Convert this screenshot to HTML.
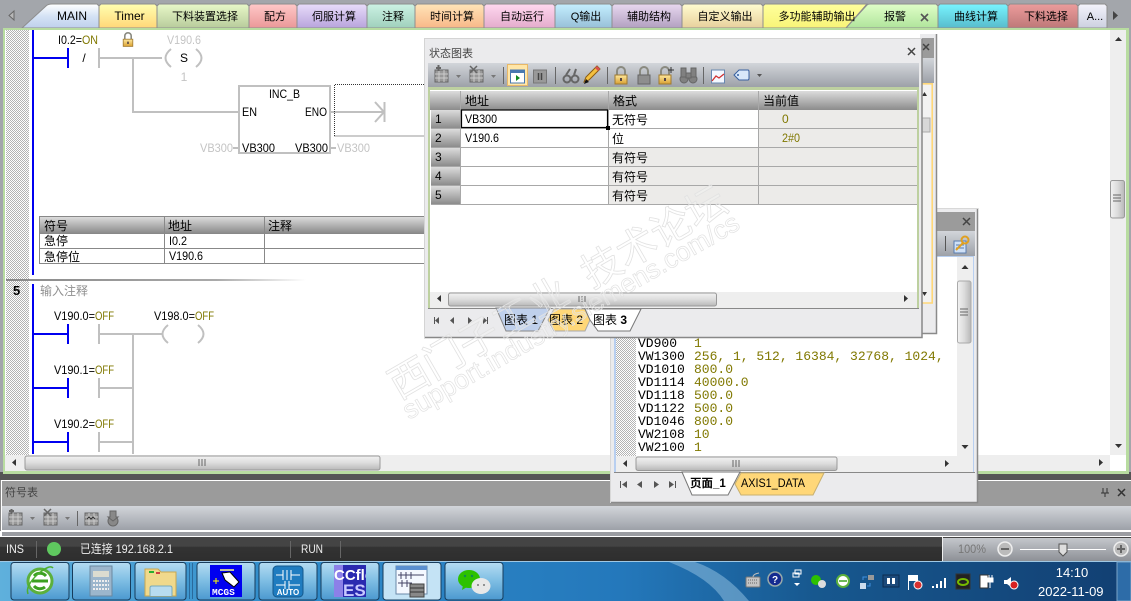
<!DOCTYPE html>
<html><head><meta charset="utf-8"><style>
html,body{margin:0;padding:0;background:#555;overflow:hidden}
svg{display:block}
text{font-family:"Liberation Sans","Noto Sans CJK SC",sans-serif;font-size:12px;fill:#000;white-space:pre}
.s{font-size:11px}.g{fill:#c4c4c4}.o{fill:#807800}.m{font-family:"Liberation Mono","Noto Sans CJK SC",monospace;font-size:13px}
.t{text-anchor:middle}.l{stroke:#c0c0c0;stroke-width:2;fill:none}.b{stroke:#0000f0;stroke-width:2;fill:none}
.gl{stroke:#a8a8a8;stroke-width:1;fill:none}
</style></head><body>
<svg xmlns="http://www.w3.org/2000/svg" width="1131" height="601" viewBox="0 0 1131 601">
<defs>
<pattern id="dit" width="2" height="2" patternUnits="userSpaceOnUse"><rect width="2" height="2" fill="#fff"/><rect width="1" height="1" fill="#b4b4b4"/><rect x="1" y="1" width="1" height="1" fill="#b4b4b4"/></pattern>
<linearGradient id="hd" x1="0" y1="0" x2="0" y2="1"><stop offset="0" stop-color="#dcdcdc"/><stop offset="1" stop-color="#8c8c8c"/></linearGradient>
<linearGradient id="tb" x1="0" y1="0" x2="0" y2="1"><stop offset="0" stop-color="#d2d5da"/><stop offset="1" stop-color="#9da1a8"/></linearGradient>
<linearGradient id="sbh" x1="0" y1="0" x2="0" y2="1"><stop offset="0" stop-color="#f2f2f2"/><stop offset=".5" stop-color="#dcdcdc"/><stop offset="1" stop-color="#b8b8b8"/></linearGradient>
<linearGradient id="sbv" x1="0" y1="0" x2="1" y2="0"><stop offset="0" stop-color="#f2f2f2"/><stop offset=".5" stop-color="#dcdcdc"/><stop offset="1" stop-color="#b8b8b8"/></linearGradient>
<linearGradient id="tk" x1="0" y1="0" x2="1" y2="0"><stop offset="0" stop-color="#5fb0dc"/><stop offset=".25" stop-color="#2f8ccb"/><stop offset=".55" stop-color="#2478bb"/><stop offset=".72" stop-color="#17588f"/><stop offset="1" stop-color="#123f72"/></linearGradient>
<linearGradient id="btn" x1="0" y1="0" x2="0" y2="1"><stop offset="0" stop-color="#b5dcf2"/><stop offset=".5" stop-color="#7dbde3"/><stop offset="1" stop-color="#4b98cf"/></linearGradient>
<linearGradient id="st" x1="0" y1="0" x2="0" y2="1"><stop offset="0" stop-color="#444"/><stop offset=".4" stop-color="#444"/><stop offset=".41" stop-color="#333"/><stop offset="1" stop-color="#2e2e2e"/></linearGradient>
<linearGradient id="zm" x1="0" y1="0" x2="0" y2="1"><stop offset="0" stop-color="#c4c7cc"/><stop offset="1" stop-color="#8d9096"/></linearGradient>
<linearGradient id="dv" x1="0" y1="0" x2="1" y2="0"><stop offset="0" stop-color="#888"/><stop offset=".7" stop-color="#aaa"/><stop offset="1" stop-color="#fff"/></linearGradient>
<linearGradient id="t0" x1="0" y1="0" x2="0" y2="1"><stop offset="0" stop-color="#fff"/><stop offset=".5" stop-color="#d5e3f5"/><stop offset="1" stop-color="#bfd0ec"/></linearGradient>
<linearGradient id="t1" x1="0" y1="0" x2="0" y2="1"><stop offset="0" stop-color="#ffffb0"/><stop offset="1" stop-color="#ffd778"/></linearGradient>
<linearGradient id="t2" x1="0" y1="0" x2="0" y2="1"><stop offset="0" stop-color="#e8f8c8"/><stop offset="1" stop-color="#b8cc9c"/></linearGradient>
<linearGradient id="t3" x1="0" y1="0" x2="0" y2="1"><stop offset="0" stop-color="#ffc8c8"/><stop offset="1" stop-color="#ea9898"/></linearGradient>
<linearGradient id="t4" x1="0" y1="0" x2="0" y2="1"><stop offset="0" stop-color="#e8dcfa"/><stop offset="1" stop-color="#b8a4dc"/></linearGradient>
<linearGradient id="t5" x1="0" y1="0" x2="0" y2="1"><stop offset="0" stop-color="#ccf2e4"/><stop offset="1" stop-color="#a0d0bc"/></linearGradient>
<linearGradient id="t6" x1="0" y1="0" x2="0" y2="1"><stop offset="0" stop-color="#ffe4b8"/><stop offset="1" stop-color="#f8b888"/></linearGradient>
<linearGradient id="t7" x1="0" y1="0" x2="0" y2="1"><stop offset="0" stop-color="#ffd8f0"/><stop offset="1" stop-color="#e4accc"/></linearGradient>
<linearGradient id="t8" x1="0" y1="0" x2="0" y2="1"><stop offset="0" stop-color="#c4eeff"/><stop offset="1" stop-color="#98c0d8"/></linearGradient>
<linearGradient id="t9" x1="0" y1="0" x2="0" y2="1"><stop offset="0" stop-color="#e8d8f0"/><stop offset="1" stop-color="#b2a0c0"/></linearGradient>
<linearGradient id="t10" x1="0" y1="0" x2="0" y2="1"><stop offset="0" stop-color="#fffcd0"/><stop offset="1" stop-color="#e8d09c"/></linearGradient>
<linearGradient id="t11" x1="0" y1="0" x2="0" y2="1"><stop offset="0" stop-color="#ffff9c"/><stop offset="1" stop-color="#f8f478"/></linearGradient>
<linearGradient id="t12" x1="0" y1="0" x2="0" y2="1"><stop offset="0" stop-color="#e0ffc8"/><stop offset="1" stop-color="#b0e49c"/></linearGradient>
<linearGradient id="t13" x1="0" y1="0" x2="0" y2="1"><stop offset="0" stop-color="#78f4ff"/><stop offset="1" stop-color="#58bccc"/></linearGradient>
<linearGradient id="t14" x1="0" y1="0" x2="0" y2="1"><stop offset="0" stop-color="#ec9c9c"/><stop offset="1" stop-color="#be7878"/></linearGradient>
<linearGradient id="t15" x1="0" y1="0" x2="0" y2="1"><stop offset="0" stop-color="#f4f4fc"/><stop offset="1" stop-color="#ccd0e0"/></linearGradient>
<linearGradient id="lock" x1="0" y1="0" x2="0" y2="1"><stop offset="0" stop-color="#ffe9a0"/><stop offset="1" stop-color="#d9a030"/></linearGradient>
<g id="lk"><path d="M-4-1v-4a4 4 0 0 1 8 0v4" fill="none" stroke="#8a8a80" stroke-width="2"/><rect x="-6" y="-1" width="12" height="9" fill="url(#lock)" stroke="#a07a30"/><rect x="-1" y="2" width="2" height="3" fill="#544"/></g>
<g id="grd"><rect x="0" y="3" width="13" height="12" fill="#999" stroke="#666"/><path d="M0 7h13M0 11h13M4 3v12M9 3v12" stroke="#ccc" fill="none"/></g>
</defs>

<!-- base -->
<rect width="1131" height="601" fill="#a3a6ab"/>
<rect x="0" y="472" width="1131" height="8" fill="#555"/>

<!-- tabs -->
<g stroke="#8e8e8e">
<path d="M22 28 L46 6 Q48 4 52 4 H97 L99 6 V28Z" fill="url(#t0)"/>
<path d="M99 28 V6 L101 4 H155 L157 6 V28Z" fill="url(#t1)"/>
<path d="M157 28 V6 L159 4 H247 L249 6 V28Z" fill="url(#t2)"/>
<path d="M249 28 V6 L251 4 H295 L297 6 V28Z" fill="url(#t3)"/>
<path d="M297 28 V6 L299 4 H365 L367 6 V28Z" fill="url(#t4)"/>
<path d="M367 28 V6 L369 4 H413 L415 6 V28Z" fill="url(#t5)"/>
<path d="M415 28 V6 L417 4 H482 L484 6 V28Z" fill="url(#t6)"/>
<path d="M484 28 V6 L486 4 H553 L555 6 V28Z" fill="url(#t7)"/>
<path d="M555 28 V6 L557 4 H610 L612 6 V28Z" fill="url(#t8)"/>
<path d="M612 28 V6 L614 4 H680 L682 6 V28Z" fill="url(#t9)"/>
<path d="M682 28 V6 L684 4 H761 L763 6 V28Z" fill="url(#t10)"/>
<path d="M763 28 V6 L765 4 H867 L846 28Z" fill="url(#t11)"/>
<path d="M846 28 L867 5 Q868 4 870 4 H936 L938 6 V28Z" fill="url(#t12)"/>
<path d="M938 28 V6 L940 4 H1006 L1008 6 V28Z" fill="url(#t13)"/>
<path d="M1008 28 V6 L1010 4 H1076 L1078 6 V28Z" fill="url(#t14)"/>
<path d="M1078 28 V6 L1080 4 H1105 L1107 6 V28Z" fill="url(#t15)"/>
</g>
<path d="M14 11 L9 15.500 L14 20Z" fill="#b8b8b8" stroke="#666"/>
<path d="M1113 11 L1118 15.500 L1113 20Z" fill="#444"/>
<g>
<text x="72" y="20" class="t">MAIN</text>
<text x="129.500" y="20" class="t">Timer</text>
<text x="205" y="20" class="t s">下料装置选择</text>
<text x="275" y="20" class="t s">配方</text>
<text x="334" y="20" class="t s">伺服计算</text>
<text x="393" y="20" class="t s">注释</text>
<text x="452" y="20" class="t s">时间计算</text>
<text x="522" y="20" class="t s">自动运行</text>
<text x="586" y="20" class="t s">Q输出</text>
<text x="649" y="20" class="t s">辅助结构</text>
<text x="725" y="20" class="t s">自定义输出</text>
<text x="817" y="20" class="t s">多功能辅助输出</text>
<text x="895" y="20" class="t s">报警</text>
<text x="976" y="20" class="t s">曲线计算</text>
<text x="1046" y="20" class="t s">下料选择</text>
<text x="1095" y="20" class="t s">A...</text>
</g>
<path d="M921 14l7 7M928 14l-7 7" stroke="#555" stroke-width="1.600"/>

<!-- main panel -->
<rect x="3" y="28" width="1126" height="446" fill="#b8dca0"/>
<rect x="5" y="30" width="1121" height="441" fill="#fff"/>
<rect x="6" y="30" width="23" height="425" fill="#d9d9d9"/>
<rect x="6" y="30" width="23" height="425" fill="url(#dit)"/>
<rect x="1110" y="30" width="16" height="425" fill="#eeeeee"/>
<path d="M1115 41h7l-3.500-4z" fill="#333"/>
<path d="M1115 444h7l-3.500 4z" fill="#333"/>
<rect x="1110.500" y="180.500" width="14" height="37.500" rx="2" fill="url(#sbv)" stroke="#999"/>
<path d="M1113 195h8M1113 198h8M1113 201h8" stroke="#666"/>
<rect x="5" y="455" width="1105" height="16" fill="#eee"/>
<path d="M16 459v7l-4-3.500z" fill="#333"/>
<path d="M1099 459v7l4-3.500z" fill="#333"/>
<rect x="25" y="456" width="355" height="14" rx="2" fill="url(#sbh)" stroke="#999"/>
<path d="M199 459v7M202 459v7M205 459v7" stroke="#666"/>

<!-- ladder net 4 -->
<path class="b" d="M33 30V275"/>
<path class="b" d="M33 58H68M68 48V68"/>
<text x="58" y="44" textLength="24" lengthAdjust="spacingAndGlyphs">I0.2=</text><text x="82" y="44" class="o" textLength="16" lengthAdjust="spacingAndGlyphs">ON</text>
<use href="#lk" transform="translate(128,40) scale(.8)"/>
<text x="167" y="44" class="g" textLength="34" lengthAdjust="spacingAndGlyphs">V190.6</text>
<path class="l" d="M99 48V68M99 58H162M133 58V112H238"/>
<text x="84" y="62" class="t">/</text>
<path class="l" d="M171 49Q160 58 171 67M196 49Q207 58 196 67"/>
<text x="184" y="62" class="t">S</text>
<text x="184" y="81" class="t g">1</text>
<rect x="239" y="86" width="91" height="67" fill="#fff" stroke="#c0c0c0" stroke-width="2"/>
<text x="269" y="98" textLength="31" lengthAdjust="spacingAndGlyphs">INC_B</text>
<text x="242" y="116" textLength="15" lengthAdjust="spacingAndGlyphs">EN</text><text x="305" y="116" textLength="22" lengthAdjust="spacingAndGlyphs">ENO</text>
<text x="242" y="152" textLength="33" lengthAdjust="spacingAndGlyphs">VB300</text><text x="295" y="152" textLength="33" lengthAdjust="spacingAndGlyphs">VB300</text>
<text x="200" y="152" class="g" textLength="33" lengthAdjust="spacingAndGlyphs">VB300</text><text x="337" y="152" class="g" textLength="33" lengthAdjust="spacingAndGlyphs">VB300</text>
<path class="l" d="M233 148H238M331 148H336M331 112H384M375 102L384 112L375 122M384.500 102V122"/>
<path d="M334.500 136V84.500H424M334.500 136H424" stroke="#333" stroke-dasharray="1 1" fill="none"/>

<!-- symbol table -->
<rect x="39.500" y="216.500" width="386" height="47" fill="#fff" stroke="#888"/>
<rect x="40" y="217" width="386" height="16" fill="url(#hd)"/>
<path d="M39 233.500H426M39 248.500H426M164.500 217V263M264.500 217V263" stroke="#888"/>
<text x="44" y="230">符号</text><text x="168" y="230">地址</text><text x="268" y="230">注释</text>
<text x="44" y="245">急停</text><text x="169" y="245" textLength="18" lengthAdjust="spacingAndGlyphs">I0.2</text>
<text x="44" y="261">急停位</text><text x="169" y="260" textLength="34" lengthAdjust="spacingAndGlyphs">V190.6</text>

<!-- divider -->
<rect x="6" y="279" width="300" height="2" fill="url(#dv)"/>

<!-- net 5 -->
<text x="13" y="295" style="font-weight:bold;font-size:13px">5</text>
<path class="b" d="M33 284V454"/>
<text x="40" y="295" style="fill:#909090">输入注释</text>
<text x="54" y="320" textLength="41" lengthAdjust="spacingAndGlyphs">V190.0=</text><text x="95" y="320" class="o" textLength="19" lengthAdjust="spacingAndGlyphs">OFF</text>
<text x="154" y="320" textLength="41" lengthAdjust="spacingAndGlyphs">V198.0=</text><text x="195" y="320" class="o" textLength="19" lengthAdjust="spacingAndGlyphs">OFF</text>
<path class="b" d="M33 334H68M68 324V344"/>
<path class="l" d="M99 324V344M99 334H162M133 334V454"/>
<path class="l" d="M168 325Q157 334 168 343M198 325Q209 334 198 343"/>
<text x="54" y="374" textLength="41" lengthAdjust="spacingAndGlyphs">V190.1=</text><text x="95" y="374" class="o" textLength="19" lengthAdjust="spacingAndGlyphs">OFF</text>
<path class="b" d="M33 388H68M68 378V398"/>
<path class="l" d="M99 378V398M99 388H133"/>
<text x="54" y="428" textLength="41" lengthAdjust="spacingAndGlyphs">V190.2=</text><text x="95" y="428" class="o" textLength="19" lengthAdjust="spacingAndGlyphs">OFF</text>
<path class="b" d="M33 442H68M68 432V452"/>
<path class="l" d="M99 432V452M99 442H133"/>

<!-- symbol panel -->
<rect x="0" y="480" width="1131" height="57" fill="#fff"/>
<rect x="2" y="481" width="1129" height="25" fill="#9b9b9b"/>
<rect x="2" y="506" width="1129" height="24" fill="url(#tb)"/>
<rect x="2" y="532" width="1129" height="4" fill="#9b9da2"/>
<path d="M0.500 531V480" stroke="#888"/>
<text x="5" y="496" class="s" style="fill:#444">符号表</text>
<path d="M1103 488v5M1107 488v5M1101 493h8M1105 493v4" stroke="#333" fill="none"/>
<path d="M1118 489l7 7M1125 489l-7 7" stroke="#333" stroke-width="1.500"/>
<use href="#grd" x="9" y="510"/><path d="M9 511h5M11.500 509v5" stroke="#666" stroke-width="2"/>
<path d="M30 517h5l-2.500 3z" fill="#777"/>
<use href="#grd" x="44" y="510"/><path d="M44 509l7 7M51 509l-7 7" stroke="#666" stroke-width="1.500"/>
<path d="M65 517h5l-2.500 3z" fill="#777"/>
<path d="M77.500 511v15" stroke="#666"/>
<use href="#grd" x="85" y="510"/><path d="M87 519l2-2 2 2 2-2 2 2" stroke="#333" fill="none"/>
<circle cx="113" cy="521" r="5" fill="#888" stroke="#666"/><path d="M110 511h6v6h2l-5 4-5-4h2z" fill="#888" stroke="#666"/>

<!-- status bar -->
<rect x="0" y="537" width="1131" height="24" fill="url(#st)"/>
<path d="M36.500 541v17M290.500 541v17M340.500 541v17" stroke="#666"/>
<text x="6" y="553" style="fill:#eee" textLength="18" lengthAdjust="spacingAndGlyphs">INS</text>
<circle cx="54" cy="549" r="7" fill="#5fc85f"/>
<text x="80" y="553" style="fill:#eee" textLength="93" lengthAdjust="spacingAndGlyphs">已连接 192.168.2.1</text>
<text x="301" y="553" style="fill:#eee" textLength="22" lengthAdjust="spacingAndGlyphs">RUN</text>
<rect x="943" y="538" width="188" height="23" fill="url(#zm)"/>
<path d="M942.500 537v24" stroke="#eee"/>
<text x="958" y="553" style="fill:#777" textLength="28" lengthAdjust="spacingAndGlyphs">100%</text>
<circle cx="1005" cy="549" r="7" fill="#bbb" stroke="#eee" stroke-width="1.500"/><path d="M1001 549h8" stroke="#666" stroke-width="2"/>
<path d="M1020 549.500h86" stroke="#fff"/>
<path d="M1059 544h8v8l-4 4-4-4z" fill="#ddd" stroke="#555"/>
<circle cx="1121" cy="549" r="7" fill="#bbb" stroke="#eee" stroke-width="1.500"/><path d="M1117 549h8M1121 545v8" stroke="#666" stroke-width="2"/>

<!-- taskbar -->
<rect x="0" y="561" width="1131" height="40" fill="url(#tk)"/>
<rect x="0" y="561" width="1131" height="1" fill="#9fc8e4"/>
<path d="M669 562Q710 578 724 601H749Q725 572 695 562Z" fill="#8ebedf" opacity=".55"/>
<g stroke="#173c5c" fill="url(#btn)">
<rect x="11" y="562.500" width="58" height="37.500" rx="3"/>
<rect x="72.500" y="562.500" width="58" height="37.500" rx="3"/>
<rect x="135" y="562.500" width="51" height="37.500" rx="3"/>
<rect x="197" y="562.500" width="58" height="37.500" rx="3"/>
<rect x="259" y="562.500" width="58" height="37.500" rx="3"/>
<rect x="321" y="562.500" width="58" height="37.500" rx="3"/>
<rect x="383" y="562.500" width="58" height="37.500" rx="3" fill="#c4e3f5"/>
<rect x="445" y="562.500" width="58" height="37.500" rx="3"/>
</g>
<path d="M189.500 563v36M192.500 563v36" stroke="#2a6a9c"/>
<!-- IE -->
<circle cx="40" cy="581" r="12" fill="#fff" stroke="#5cb03c" stroke-width="3"/><path d="M32 581h16M34 576a8 8 0 0 1 12 0M34 586a8 8 0 0 0 11 1" stroke="#3ca020" stroke-width="3" fill="none"/><path d="M28 594Q25 586 38 574Q50 564 53 568" stroke="#4caf30" fill="none" stroke-width="1.500"/>
<!-- calc -->
<rect x="90" y="566" width="22" height="30" fill="#9cb6cc" stroke="#6a88a0"/><rect x="93" y="571" width="16" height="6" fill="#dcdcd0"/><path d="M93 581h16M93 585h16M93 589h16" stroke="#eee" stroke-width="2" stroke-dasharray="2 1"/>
<!-- folder -->
<path d="M145 569h13l3 3h15v24h-31z" fill="#f0d98c" stroke="#c8a850"/><rect x="149" y="571" width="5" height="2" fill="#28b030"/><rect x="156" y="572" width="4" height="2" fill="#d04040"/><path d="M150 596v-8q0-2 2-2h18q2 0 2 2v8" fill="#b8dcf0" stroke="#7ab"/>
<!-- MCGS -->
<rect x="210" y="565" width="32" height="32" fill="#0000f0"/><path d="M222 573l8-1 9 10-5 5-9-7z" fill="#fff" stroke="#000"/><path d="M220 570h14" stroke="#ff8" stroke-width="1.500"/><path d="M213 581h6M216 578v6" stroke="#ff0"/>
<text x="212" y="595" style="font-family:'Liberation Mono',monospace;font-size:9.500px;fill:#fff;font-weight:bold">MCGS</text>
<!-- AUTO -->
<rect x="273" y="566" width="30" height="31" rx="4" fill="#1f7cc0" stroke="#14588c"/><path d="M276 575h7M283 570v10M291 570v10M287 570v10M291 575h9M276 585h9M285 581v8M289 581v8M289 585h11" stroke="#fff" fill="none"/>
<text x="288" y="595" class="t" style="font-size:8px;fill:#fff;font-weight:bold">AUTO</text>
<!-- CCfle -->
<svg x="334" y="565" width="32" height="32" viewBox="0 0 32 32"><rect width="32" height="32" fill="#2a2ab0"/><rect width="9" height="32" fill="#8c80e8"/><text x="0" y="15" style="font-size:15px;fill:#fff;font-weight:bold">CCfle</text><text x="9" y="31" style="font-size:17px;fill:#c8c8ff;font-weight:bold">ES</text></svg>
<!-- LAD -->
<rect x="396" y="566" width="31" height="28" fill="#f4f8ff" stroke="#6a88a8"/><rect x="396" y="566" width="31" height="4" fill="#5a90d0"/><path d="M398 575h26M398 583h14M401 572v7M406 572v7M411 572v7M402 580v7M407 580v7" stroke="#446" fill="none"/><rect x="410" y="584" width="14" height="13" fill="#888" stroke="#444"/><path d="M410 588h14M410 592h14" stroke="#333"/>
<!-- WeChat -->
<ellipse cx="469" cy="579" rx="11" ry="9" fill="#2dc100"/><path d="M463 585l-1 5 5-3z" fill="#2dc100"/><ellipse cx="481" cy="586" rx="9.500" ry="8" fill="#e8e8e8"/><circle cx="465" cy="576" r="1.200" fill="#185"/><circle cx="472" cy="576" r="1.200" fill="#185"/><circle cx="478" cy="585" r="1" fill="#777"/><circle cx="484" cy="585" r="1" fill="#777"/>

<!-- tray -->
<rect x="746" y="577" width="14" height="10" rx="1" fill="#c4c4c4" stroke="#777"/><path d="M748 580h10M748 583h10" stroke="#666" stroke-dasharray="1 1"/><path d="M753 577q0-3 6-4" stroke="#bbb" fill="none"/>
<circle cx="775" cy="579" r="7" fill="#142a90" stroke="#9aa" stroke-width="1.500"/><text x="775" y="583" class="t" style="fill:#fff;font-weight:bold;font-size:10px">?</text>
<rect x="795" y="570" width="6" height="4" fill="none" stroke="#fff"/><rect x="793" y="573" width="6" height="4" fill="none" stroke="#fff"/><path d="M794 583h6l-3 3z" fill="#fff"/>
<circle cx="816" cy="580" r="5" fill="#2dc100"/><circle cx="822" cy="584" r="4" fill="#ddd"/>
<circle cx="843" cy="581" r="6" fill="#fff" stroke="#5cb03c" stroke-width="2"/><path d="M839 581h8" stroke="#3ca020" stroke-width="1.500"/>
<rect x="860" y="583" width="6" height="6" fill="#cde"/><rect x="868" y="575" width="6" height="5" fill="#999"/><path d="M863 580v-3h4M870 583v3h-3" stroke="#4090e0" fill="none"/>
<rect x="883" y="575" width="16" height="12" fill="#1c4a7a" stroke="#0c2c50"/><path d="M887 578h3v6h-3zM892 578h3v6h-3z" fill="#fff"/>
<path d="M908.500 575v15" stroke="#fff"/><path d="M909 575h9v6h-9z" fill="#fff"/><circle cx="918" cy="585" r="4" fill="#d83030" stroke="#fff"/>
<path d="M932 588h2v-2h-2zM936 588h2v-4h-2zM940 588h2v-7h-2zM944 588h2v-10h-2z" fill="#fff"/>
<rect x="956" y="574" width="14" height="15" fill="#222" stroke="#333"/><ellipse cx="963" cy="582" rx="5" ry="3" fill="none" stroke="#76b900" stroke-width="2"/>
<rect x="980" y="575" width="8" height="13" fill="#fff" stroke="#333"/><path d="M988 578h5v4h-5zM989 575v3M992 575v3M990 582v6" fill="#fff" stroke="#fff"/>
<path d="M1004 580h3l4-3v10l-4-3h-3z" fill="#fff"/><circle cx="1014" cy="585" r="4" fill="#d82020" stroke="#fff"/>
<text x="1072" y="577" class="t" style="fill:#fff;font-size:13px">14:10</text>
<text x="1038" y="596" style="fill:#fff;font-size:13px">2022-11-09</text>
<rect x="1117" y="562" width="14" height="39" fill="#2d6ca8" stroke="#7aa4c8"/>

<!-- window 3 -->
<rect x="610" y="208" width="368" height="295" fill="#ebebed"/>
<path d="M977.500 208V502.500H610" stroke="#8a8a8a" fill="none" stroke-width="1.500"/>
<path d="M610.500 503V208.500H978" stroke="#d8d8d8" fill="none"/>
<rect x="614" y="212" width="361" height="19" fill="#9b9b9b"/>
<path d="M963 218l7 7M970 218l-7 7" stroke="#444" stroke-width="1.500"/>
<rect x="614" y="231" width="361" height="25" fill="url(#tb)"/>
<rect x="614" y="256" width="360" height="216" fill="#b8cff0"/>
<rect x="616" y="257" width="357" height="215" fill="#fff"/>
<rect x="616" y="257" width="20" height="199" fill="#d9d9d9"/>
<rect x="616" y="257" width="20" height="199" fill="url(#dit)"/>
<path d="M945.500 236v15" stroke="#555"/>
<g transform="translate(954,235)"><rect x="0" y="6" width="12" height="12" fill="#cfe0f6" stroke="#5a7cae"/><path d="M2 10h8M2 13h8" stroke="#5a7cae"/><circle cx="11" cy="5" r="3.500" fill="none" stroke="#e0a020" stroke-width="2"/><path d="M9 8l-7 7" stroke="#e0a020" stroke-width="2"/></g>
<rect x="957" y="257" width="16" height="199" fill="#eee"/>
<path d="M961.500 269h7l-3.500-4z" fill="#333"/>
<path d="M961.500 445h7l-3.500 4z" fill="#333"/>
<rect x="957.500" y="281" width="13.500" height="62" rx="2" fill="url(#sbv)" stroke="#aaa"/>
<path d="M960 309h8M960 312h8M960 315h8" stroke="#666"/>
<g>
<text x="638" y="347" class="m">VD900</text><text x="694" y="347" class="m o">1</text>
<text x="638" y="360" class="m">VW1300</text><text x="694" y="360" class="m o">256, 1, 512, 16384, 32768, 1024,</text>
<text x="638" y="373" class="m">VD1010</text><text x="694" y="373" class="m o">800.0</text>
<text x="638" y="386" class="m">VD1114</text><text x="694" y="386" class="m o">40000.0</text>
<text x="638" y="399" class="m">VD1118</text><text x="694" y="399" class="m o">500.0</text>
<text x="638" y="412" class="m">VD1122</text><text x="694" y="412" class="m o">500.0</text>
<text x="638" y="425" class="m">VD1046</text><text x="694" y="425" class="m o">800.0</text>
<text x="638" y="438" class="m">VW2108</text><text x="694" y="438" class="m o">10</text>
<text x="638" y="451" class="m">VW2100</text><text x="694" y="451" class="m o">1</text>
</g>
<rect x="616" y="456" width="357" height="16" fill="#eee"/>
<path d="M627 460v7l-4-3.500z" fill="#333"/>
<path d="M945 460v7l4-3.500z" fill="#333"/>
<rect x="636" y="457" width="201" height="13.500" rx="2" fill="url(#sbh)" stroke="#999"/>
<path d="M733 460v7M736 460v7M739 460v7" stroke="#666"/>
<rect x="614" y="472" width="361" height="1" fill="#888"/>
<g fill="#555"><path d="M627 481l-5 3.500l5 3.500z"/><path d="M642 481l-5 3.500l5 3.500z"/><path d="M654 481l5 3.500l-5 3.500z"/><path d="M669 481l5 3.500l-5 3.500z"/></g>
<path d="M620.500 481v7M675.500 481v7" stroke="#555"/>
<path d="M682 472L692 495H728L740 472Z" fill="#fff" stroke="#777"/>
<path d="M735 484L741 473H824L813 495H741Z" fill="#ffd778" stroke="#c8b070"/>
<text x="690" y="487" style="font-weight:bold;font-size:11.500px">页面_1</text>
<text x="741" y="487" textLength="64" lengthAdjust="spacingAndGlyphs">AXIS1_DATA</text>

<!-- window 2 -->
<rect x="920" y="34" width="17" height="300" fill="#ebebed"/>
<path d="M936.500 34V333.500H920" stroke="#8a8a8a" fill="none" stroke-width="1.500"/>
<rect x="920" y="38" width="14" height="20" fill="#9b9b9b"/>
<path d="M923 44l6 6M929 44l-6 6" stroke="#444" stroke-width="1.500"/>
<rect x="920" y="58" width="14" height="25" fill="url(#tb)"/>
<rect x="920" y="83" width="13" height="220" fill="#f2f2f2"/>
<path d="M920 83.800H932.200V303H920" stroke="#ffd778" stroke-width="1.600" fill="none"/>
<path d="M922 96h5l-2.500-4z" fill="#333"/>
<path d="M922 292h5l-2.500 4z" fill="#333"/>
<rect x="922" y="118" width="8" height="14" fill="#d8d8d8" stroke="#aaa"/>

<!-- window 1 -->
<rect x="424" y="38" width="498" height="300" fill="#ebebed"/>
<path d="M922 39V337.500H424" stroke="#888" fill="none" stroke-width="1.500"/>
<path d="M424.500 338V38.500H922" stroke="#d4d4d4" fill="none"/>
<text x="429" y="57" class="s" style="fill:#444">状态图表</text>
<path d="M908 48l7 7M915 48l-7 7" stroke="#444" stroke-width="1.500"/>
<rect x="428" y="63" width="491" height="24" fill="url(#tb)"/>
<use href="#grd" x="435" y="67"/><path d="M436 68h5M438.500 65v6" stroke="#666" stroke-width="2"/>
<path d="M456 75h5l-2.500 3z" fill="#777"/>
<use href="#grd" x="470" y="67"/><path d="M470 66l7 7M477 66l-7 7" stroke="#666" stroke-width="1.500"/>
<path d="M491 75h5l-2.500 3z" fill="#777"/>
<path d="M503.500 67v17" stroke="#666"/>
<rect x="507.500" y="64.500" width="20" height="21" fill="#ffe6a8" stroke="#e8b868"/>
<rect x="510.500" y="70" width="14" height="13" fill="#fff" stroke="#4878b0"/><rect x="510.500" y="70" width="14" height="3" fill="#4878b0"/><path d="M516 75l4 3l-4 3z" fill="#108820"/>
<rect x="533.500" y="70" width="13" height="13" fill="#999" stroke="#777"/><path d="M538.500 73v7M541.500 73v7" stroke="#444" stroke-width="1.500"/>
<path d="M555.500 67v17" stroke="#666"/>
<g fill="none" stroke="#666" stroke-width="2"><circle cx="567" cy="79" r="3.500"/><circle cx="575" cy="79" r="3.500"/><path d="M570 78h2M566 75l4-6M574 75l2-6"/></g>
<path d="M584 82l2-5 11-11 3 3-11 11z" fill="#f4c040" stroke="#8a5a10"/><path d="M584 84l2-5 3 3z" fill="#111"/><path d="M595 68l3 3 2-2-3-3z" fill="#d85050"/>
<path d="M607.500 67v17" stroke="#666"/>
<use href="#lk" transform="translate(621,76)"/>
<use href="#lk" transform="translate(644,76)"/><rect x="638" y="75" width="12" height="9" fill="#8e8e8e" stroke="#666"/>
<use href="#lk" transform="translate(665,76)"/><path d="M668 70h6M671 67v6" stroke="#333"/>
<g fill="#808080" stroke="#666"><circle cx="684" cy="79" r="4"/><circle cx="693" cy="79" r="4"/><rect x="681" y="68" width="5" height="9"/><rect x="691" y="68" width="5" height="9"/><rect x="686" y="73" width="5" height="5"/></g>
<path d="M703.500 67v17" stroke="#666"/>
<rect x="711.500" y="70" width="13" height="13" fill="#f4f8ff" stroke="#6888b0"/><path d="M712 81l4-5 3 2 5-4" stroke="#d03030" fill="none" stroke-width="1.300"/>
<path d="M739 70H748Q749 70 749 72V78Q749 80 748 80H739L734 75Z" fill="#d8e8fa" stroke="#3860a0"/><circle cx="738" cy="75" r="1" fill="#3860a0"/>
<path d="M757 74h5l-2.500 3z" fill="#555"/>
<rect x="428" y="87" width="491" height="221" fill="#bdd0a0"/>
<rect x="430" y="90" width="487" height="218" fill="#fff"/>
<!-- table 1 -->
<rect x="430" y="91" width="487" height="19" fill="url(#hd)"/>
<g fill="url(#hd)"><rect x="431" y="110" width="30" height="18"/><rect x="431" y="129" width="30" height="18"/><rect x="431" y="148" width="30" height="18"/><rect x="431" y="167" width="30" height="18"/><rect x="431" y="186" width="30" height="18"/></g>
<rect x="609" y="110" width="308" height="18" fill="#ecebe9"/>
<rect x="759" y="129" width="158" height="18" fill="#ecebe9"/>
<rect x="609" y="148" width="308" height="56" fill="#ecebe9"/>
<rect x="609" y="110" width="150" height="18" fill="#fff"/><rect x="609" y="129" width="150" height="18" fill="#fff"/>
<path class="gl" d="M431 128.500H917M431 147.500H917M431 166.500H917M431 185.500H917M431 204.500H917M460.500 91V205M608.500 91V205M758.500 91V205"/>
<rect x="461.500" y="110" width="146" height="17.500" fill="#fff" stroke="#000" stroke-width="1.200"/>
<rect x="606" y="126" width="4" height="4" fill="#000"/>
<g>
<text x="465" y="105">地址</text><text x="613" y="105">格式</text><text x="763" y="105">当前值</text>
<text x="435" y="123">1</text><text x="435" y="142">2</text><text x="435" y="161">3</text><text x="435" y="180">4</text><text x="435" y="199">5</text>
<text x="465" y="123" textLength="32" lengthAdjust="spacingAndGlyphs">VB300</text><text x="465" y="142" textLength="34" lengthAdjust="spacingAndGlyphs">V190.6</text>
<text x="612" y="124">无符号</text><text x="612" y="143">位</text><text x="612" y="162">有符号</text><text x="612" y="181">有符号</text><text x="612" y="200">有符号</text>
<text x="782" y="123" class="o">0</text><text x="782" y="142" class="o" textLength="18" lengthAdjust="spacingAndGlyphs">2#0</text>
</g>
<!-- hscroll window 1 -->
<rect x="430" y="292" width="487" height="16" fill="#eeeeee"/>
<path d="M441 295v7l-4-3.500z" fill="#333"/>
<path d="M904 295v7l4-3.500z" fill="#333"/>
<rect x="448.500" y="293" width="268" height="13" rx="2" fill="url(#sbh)" stroke="#999"/>
<path d="M579 296v6M582 296v6M585 296v6" stroke="#666"/>
<rect x="428" y="308" width="491" height="1" fill="#888"/>
<g fill="#555"><path d="M439 317l-4 3.500l4 3.500z"/><path d="M454 317l-4 3.500l4 3.500z"/><path d="M468 317l4 3.500l-4 3.500z"/><path d="M483 317l4 3.500l-4 3.500z"/></g>
<path d="M434.500 317v7M487.500 317v7" stroke="#555"/>
<path d="M496 308L506 331H538L550 308Z" fill="#bfd0ec" stroke="#888"/>
<path d="M548 320L554 309H585L590 320L585 331H554Z" fill="#ffd778" stroke="#aaa"/>
<path d="M590 320L585 309H641L630 331H598Z" fill="#fff" stroke="#777"/>
<text x="504" y="324">图表 1</text><text x="549" y="324">图表 2</text><text x="593" y="324">图表 <tspan style="font-weight:bold">3</tspan></text>

<!-- watermark -->
<g>
<text transform="translate(399,400) rotate(-30)" style="font-size:40px;fill:#fff;fill-opacity:.2;stroke:#e2e2e2;stroke-width:.8">西门子工业  技术论坛</text>
<text transform="translate(409,420) rotate(-30)" style="font-size:26.500px;fill:#fff;fill-opacity:.2;stroke:#e2e2e2;stroke-width:.7">support.industry.siemens.com/cs</text>
</g>
</svg>
</body></html>
